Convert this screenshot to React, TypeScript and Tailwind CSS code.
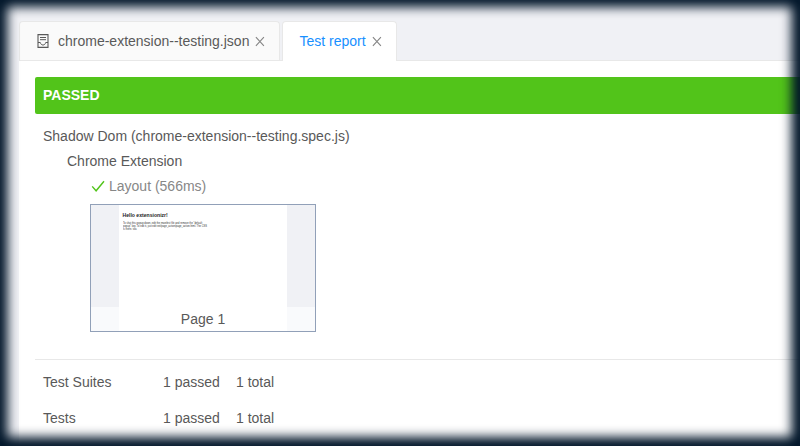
function FileIcon() {
  return (
    <svg className="mr-2 h-[14px] w-[14px] shrink-0" viewBox="0 0 14 14" fill="none" stroke="#595959">
      <path d="M2 .6h10v12.8H2z" strokeWidth="1.1" />
      <path d="M4 3.5h6M4 5.700h6" />
      <path d="M2 8.500h2.300c.4 1.700 1.400 2.500 2.700 2.500s2.300-.8 2.700-2.500H12" />
    </svg>
  );
}

function CloseIcon() {
  return (
    <svg className="ml-[5px] h-[11px] w-[11px] shrink-0" viewBox="0 0 11 11" fill="none" stroke="#858585" strokeWidth="1.1">
      <path d="M1.900 1.200 9.900 9.900M9.900 1.200 1.900 9.900" />
    </svg>
  );
}

function SummaryRow({ label }: { label: string }) {
  return (
    <div className="flex h-9 items-center pl-2">
      <span className="w-[120px]">{label}</span>
      <span className="w-[73px]">1 passed</span>
      <span>1 total</span>
    </div>
  );
}

export default function App() {
  return (
    <div className="relative flex h-[446px] w-[800px] overflow-hidden bg-[#f0f1f5] font-['Liberation_Sans',Arial,sans-serif] text-[14px] leading-[22px] text-[#595959]">
      <div className="w-[19px] shrink-0" />
      <main className="flex min-w-0 flex-1 flex-col bg-white">
        <div className="flex h-[61px] shrink-0 items-end border-b border-[#e8e8e8] bg-[#f0f1f5]">
          <div className="mr-0.5 flex h-[39px] w-[261px] shrink-0 items-center rounded-t border border-b-0 border-[#e8e8e8] bg-[#fafafa] pl-4">
            <FileIcon />
            <span className="whitespace-nowrap">chrome-extension--testing.json</span>
            <CloseIcon />
          </div>
          <div className="-mb-px flex h-10 w-[115px] shrink-0 items-center rounded-t border border-b-0 border-[#e8e8e8] bg-white pb-px pl-[16.500px] text-[#1890ff]">
            <span className="whitespace-nowrap">Test report</span>
            <CloseIcon />
          </div>
        </div>
        <div className="flex flex-col pl-4 pt-4">
          <div className="flex h-[37px] items-center rounded-l-[2px] bg-[#52c41a] pb-px pl-2 font-bold text-white">PASSED</div>
          <div className="pl-2 pt-[10px] leading-[25px]">
            <div>Shadow Dom (chrome-extension--testing.spec.js)</div>
            <div className="pl-6">Chrome Extension</div>
            <div className="flex items-center pl-12 text-[#878787]">
              <svg className="mb-0.5 mr-1 h-[14px] w-[14px]" viewBox="0 0 14 14" fill="none" stroke="#52c41a" strokeWidth="1.400">
                <path d="m1.200 7.400 3.900 4.400L13 2.200" />
              </svg>
              Layout (566ms)
            </div>
          </div>
          <div className="ml-[55px] mt-[5px] flex h-[128px] w-[226px] flex-col border border-[#91a0b8] bg-[#f0f1f5]">
            <div className="ml-7 h-[102px] w-[168px] shrink-0 bg-white pl-[3.500px] pt-[7px] text-[#333]">
              <div className="h-[9px] text-[5.100px] font-bold leading-[6px] text-[#1c1c1c]">Hello extensionizr!</div>
              <div className="origin-top-left scale-x-[0.238] scale-y-[0.25] whitespace-nowrap text-[10.700px] leading-[12px]">
                <div>To shut this popup down, edit the manifest file and remove the "default</div>
                <div>popup" key. To edit it, just edit ext/page_action/page_action.html. The CSS</div>
                <div>is there, too.</div>
              </div>
            </div>
            <div className="flex h-6 justify-center bg-[#f9fafc]">
              <div className="w-[168px] bg-white text-center leading-6">Page 1</div>
            </div>
          </div>
          <div className="mt-[27px] border-t border-[#e8e8e8] pt-1">
            <SummaryRow label="Test Suites" />
            <SummaryRow label="Tests" />
          </div>
        </div>
      </main>
      <div className="pointer-events-none absolute inset-0 shadow-[inset_-0.5px_-1px_11px_8px_#001529]" />
    </div>
  );
}
